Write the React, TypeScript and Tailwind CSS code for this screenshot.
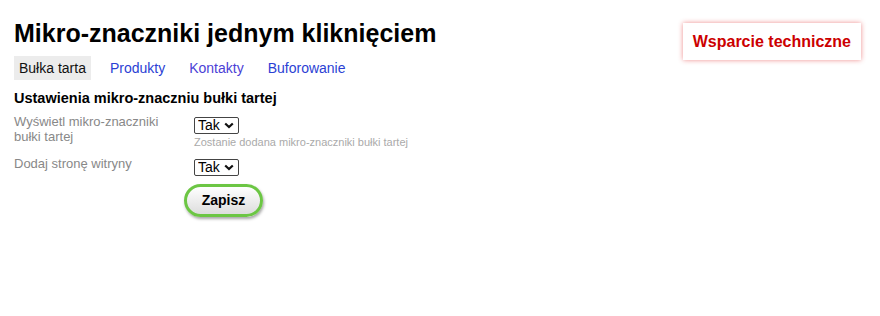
import React from 'react';

const tabs = ['Bułka tarta', 'Produkty', 'Kontakty', 'Buforowanie'];

function YesNo() {
  return (
    <div className="relative mt-[3px] w-[45px] h-[17px]">
      <select
        defaultValue="tak"
        className="appearance-none block w-full h-full py-0 text-[14px] leading-[15px] text-black border border-[#444] rounded-[2px] bg-white pl-[3px] pr-[16px]"
      >
        <option value="tak">Tak</option>
        <option value="nie">Nie</option>
      </select>
      <svg
        className="pointer-events-none absolute right-[5px] top-[5px]"
        width="10"
        height="7"
        viewBox="0 0 10 7"
      >
        <path d="M1.2 1.5l3.8 3.6 3.8-3.6" fill="none" stroke="#111" strokeWidth="2.2" />
      </svg>
    </div>
  );
}

function Row({ label, hint }: { label: string; hint?: string }) {
  return (
    <div className="flex">
      <label className="w-[180px] text-[13px] leading-[15px] text-[#888] pr-4">{label}</label>
      <div className="flex flex-col">
        <YesNo />
        {hint && <span className="mt-[2px] text-[11px] leading-[13px] text-[#aaa]">{hint}</span>}
      </div>
    </div>
  );
}

export default function App() {
  return (
    <div className="w-[880px] h-[316px] bg-white font-['Liberation_Sans',Arial,sans-serif] px-[14px] pt-[17px]">
      <div className="flex items-start justify-between">
        <div>
          <h1 className="text-[25px] leading-[32px] font-bold text-black">Mikro-znaczniki jednym kliknięciem</h1>
          <nav className="mt-[7px] flex gap-[14px] text-[14px] leading-[16px]">
            {tabs.map((t, i) => (
              <a
                key={t}
                className={
                  i === 0
                    ? 'px-[5px] py-[4px] bg-[#ececec] text-[#111]'
                    : i === 2
                    ? 'px-[5px] py-[4px] text-[#4b3fd6]'
                    : 'px-[5px] py-[4px] text-[#2b3fd4]'
                }
              >
                {t}
              </a>
            ))}
          </nav>
        </div>
        <div className="mt-[6px] mr-[5px] px-[10px] py-[10px] bg-white shadow-[0_0_5px_rgba(220,0,0,0.45)] text-[16px] leading-[17px] font-bold text-[#cc0000]">
          Wsparcie techniczne
        </div>
      </div>

      <h2 className="mt-[9px] text-[14.5px] leading-[18px] font-bold text-black">Ustawienia mikro-znaczniu bułki tartej</h2>
      <div className="mt-[7px] flex flex-col gap-[7px]">
        <Row label="Wyświetl mikro-znaczniki bułki tartej" hint="Zostanie dodana mikro-znaczniki bułki tartej" />
        <Row label="Dodaj stronę witryny" />
      </div>
      <div className="mt-[8px] pl-[170px]">
        <button className="w-[79px] h-[33px] rounded-full border-[3px] border-[#6cc644] bg-gradient-to-b from-white to-[#ddd] shadow-[1px_2px_3px_rgba(0,0,0,0.35)] text-[14px] font-bold text-black">
          Zapisz
        </button>
      </div>
    </div>
  );
}
